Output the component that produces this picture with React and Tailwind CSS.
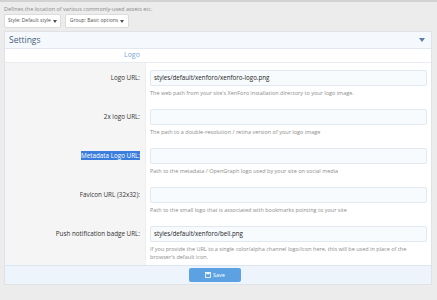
import React from "react";

// Filas del formulario de ajustes de logo
const filas = [
  {
    etiqueta: "Logo URL:",
    valor: "styles/default/xenforo/xenforo-logo.png",
    ayuda: "The web path from your site's XenForo installation directory to your logo image.",
  },
  {
    etiqueta: "2x logo URL:",
    valor: "",
    ayuda: "The path to a double-resolution / retina version of your logo image",
  },
  {
    etiqueta: "Metadata Logo URL:",
    valor: "",
    ayuda: "Path to the metadata / OpenGraph logo used by your site on social media",
    seleccionado: true,
  },
  {
    etiqueta: "Favicon URL (32x32):",
    valor: "",
    ayuda: "Path to the small logo that is associated with bookmarks pointing to your site",
  },
  {
    etiqueta: "Push notification badge URL:",
    valor: "styles/default/xenforo/bell.png",
    ayuda:
      "If you provide the URL to a single color/alpha channel logo/icon here, this will be used in place of the browser's default icon.",
  },
];

function Caret() {
  return (
    <svg width="4" height="3" viewBox="0 0 4 3" className="inline-block ml-[2px]">
      <path d="M0 0h4L2 3z" fill="currentColor" />
    </svg>
  );
}

export default function App() {
  return (
    <div
      className="w-[437px] h-[300px] overflow-hidden bg-[#ececec] border-t-2 border-[#d2d2d2] text-[#141414]"
      style={{ fontFamily: '"Open Sans", "Noto Sans", sans-serif' }}
    >
      {/* Descripción */}
      <div className="px-[4px] pt-[2px] h-[11px] text-[5.5px] leading-[11px] text-[#8a8a8a]">
        Defines the location of various commonly-used assets etc.
      </div>

      {/* Botones de estilo y grupo */}
      <div className="flex gap-[4px] px-[4px] mt-[1px]">
        <button className="h-[14px] px-[3px] bg-white border border-[#dcdcdc] rounded-[2px] text-[5px] text-[#505050] flex items-center">
          Style: Default style
          <Caret />
        </button>
        <button className="h-[14px] px-[4px] bg-white border border-[#dcdcdc] rounded-[2px] text-[5px] text-[#505050] flex items-center">
          Group: Basic options
          <Caret />
        </button>
      </div>

      {/* Panel */}
      <div className="mx-[4px] mr-[5px] mt-[3px] border border-[#dfe3e8] bg-white">
        <div className="h-[17px] bg-[#f5f9fd] border-b border-[#e3e8ee] flex items-center justify-between px-[4px]">
          <span className="text-[8.5px] text-[#47607a]">Settings</span>
          <svg width="6" height="4" viewBox="0 0 6 4" className="text-[#5b7fa6] mr-[2px]">
            <path d="M0 0h6L3 4z" fill="currentColor" />
          </svg>
        </div>

        <div className="h-[14px] border-b border-[#e8ecf0] flex items-center pl-[119px] text-[7px] text-[#7ea6d4]">
          Logo
        </div>

        {filas.map((fila, i) => (
          <div key={i} className="flex">
            <div className="w-[141px] bg-[#f5f5f5] border-r border-[#eeeeee] flex justify-end pr-[5px] pt-[10px]">
              <span
                className={
                  "text-[6.3px] leading-[9px] h-[9px] " +
                  (fila.seleccionado ? "bg-[#3b7ddd] text-white" : "text-[#333333]")
                }
              >
                {fila.etiqueta}
              </span>
            </div>
            <div className={"flex-1 pl-[4px] pr-[4px] pt-[7px] " + (i === 4 ? "pb-[4px]" : "pb-[5px]")}>
              <div className="h-[16px] bg-[#f8fbfe] border border-[#e2e8ef] rounded-[2px] flex items-center px-[3px] text-[6.2px] text-[#222222]">
                {fila.valor}
              </div>
              <div className="mt-[3px] text-[5.5px] leading-[8px] text-[#8c8c8c] min-h-[8px]">
                {fila.ayuda}
              </div>
            </div>
          </div>
        ))}

        {/* Pie con botón Guardar */}
        <div className="h-[19px] bg-[#edf4fc] border-t border-[#dbe5ef] flex items-center pl-[184px]">
          <button className="w-[52px] h-[14px] bg-[#5ca2e2] rounded-[2px] flex items-center justify-center gap-[2px] text-[5.5px] text-white">
            <svg width="6" height="6" viewBox="0 0 6 6">
              <rect x="0.5" y="0.5" width="5" height="5" fill="none" stroke="white" strokeWidth="0.8" />
              <rect x="1.5" y="0.5" width="3" height="1.8" fill="white" />
            </svg>
            Save
          </button>
        </div>
      </div>
    </div>
  );
}
